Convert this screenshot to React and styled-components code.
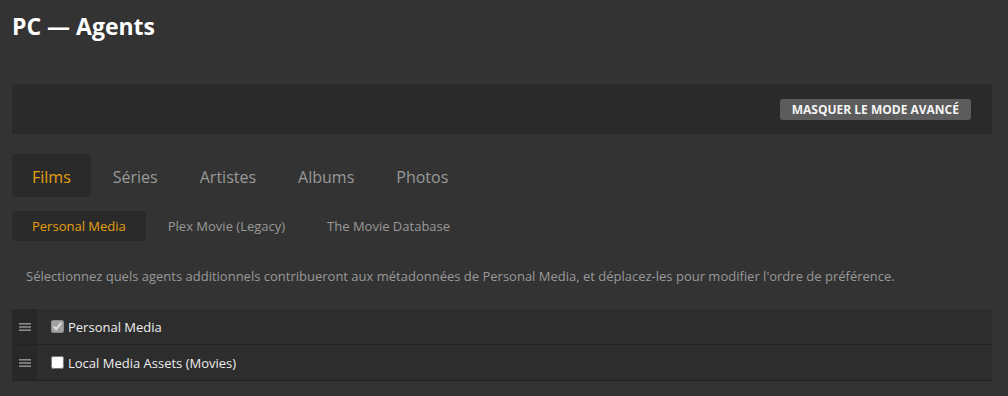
import React from 'react';
import styled, { createGlobalStyle } from 'styled-components';

const Global = createGlobalStyle`
    body {
        margin: 0;
        background: #333333;
        font-family: 'Open Sans', 'DejaVu Sans', sans-serif;
        color: #eeeeee;
    }
`

const Page = styled.div`
    padding: 0 16px 0 12px;
    height: 396px;
    overflow: hidden;
`

const Title = styled.h1`
    margin: 10px 0 0;
    font-size: 23px;
    line-height: 33px;
    font-weight: 700;
    color: #ffffff;
`

const Bar = styled.div`
    margin-top: 41px;
    height: 50px;
    background: #2a2a2a;
    display: flex;
    align-items: center;
    justify-content: flex-end;
    padding-right: 21px;
`

const Button = styled.button`
    height: 21px;
    padding: 0 12px;
    border: none;
    border-radius: 3px;
    background: #5c5c5c;
    color: #f4f4f4;
    font-family: inherit;
    font-size: 12px;
    font-weight: 700;
    text-transform: uppercase;
    cursor: pointer;
`

const Tabs = styled.div`
    display: flex;
    gap: 2px;
    margin-top: 20px;
`

const Tab = styled.div`
    height: ${props => props.small ? '30px' : '43px'};
    line-height: ${props => props.small ? '30px' : '46px'};
    padding: 0 20px;
    font-size: ${props => props.small ? '13px' : '16px'};
    border-radius: 4px;
    color: ${props => props.active ? '#e5a00d' : '#999999'};
    background: ${props => props.active ? '#2a2a2a' : 'transparent'};
`

const SubTabs = styled(Tabs)`
    margin-top: 14px;
`

const Description = styled.p`
    margin: 25px 0 0;
    padding-left: 14px;
    font-size: 13px;
    line-height: 20px;
    color: #999999;
`

const List = styled.div`
    margin-top: 23px;
`

const Row = styled.div`
    display: flex;
    height: 35px;
    background: #2d2d2d;
    border-bottom: 1px solid #232323;
`

const Handle = styled.div`
    width: 25px;
    background: #282828;
    display: flex;
    align-items: center;
    justify-content: center;
`

const Label = styled.label`
    display: flex;
    align-items: center;
    gap: 4px;
    padding-left: 14px;
    font-size: 13px;
    color: #eeeeee;
`

const Check = styled.input`
    width: 13px;
    height: 13px;
    margin: 0;
    accent-color: #aaaaaa;
`

const Grip = () => (
    <svg width="12" height="8" viewBox="0 0 12 8">
        <rect y="0" width="12" height="1.6" fill="#8a8a8a" />
        <rect y="3.2" width="12" height="1.6" fill="#8a8a8a" />
        <rect y="6.4" width="12" height="1.6" fill="#8a8a8a" />
    </svg>
)

const agents = [
    { name: 'Personal Media', checked: true, disabled: true },
    { name: 'Local Media Assets (Movies)', checked: false, disabled: false },
]

const App = () => {
    return (
        <Page>
            <Global />
            <Title>PC — Agents</Title>
            <Bar>
                <Button>Masquer le mode avancé</Button>
            </Bar>
            <Tabs>
                {['Films', 'Séries', 'Artistes', 'Albums', 'Photos'].map((t, id) => (
                    <Tab key={id} active={id === 0}>{t}</Tab>
                ))}
            </Tabs>
            <SubTabs>
                {['Personal Media', 'Plex Movie (Legacy)', 'The Movie Database'].map((t, id) => (
                    <Tab small key={id} active={id === 0}>{t}</Tab>
                ))}
            </SubTabs>
            <Description>
                Sélectionnez quels agents additionnels contribueront aux métadonnées de Personal Media, et déplacez-les pour modifier l'ordre de préférence.
            </Description>
            <List>
                {agents.map((a, id) => (
                    <Row key={id}>
                        <Handle><Grip /></Handle>
                        <Label>
                            <Check type="checkbox" defaultChecked={a.checked} disabled={a.disabled} />
                            {a.name}
                        </Label>
                    </Row>
                ))}
            </List>
        </Page>
    );
};

export default App;
